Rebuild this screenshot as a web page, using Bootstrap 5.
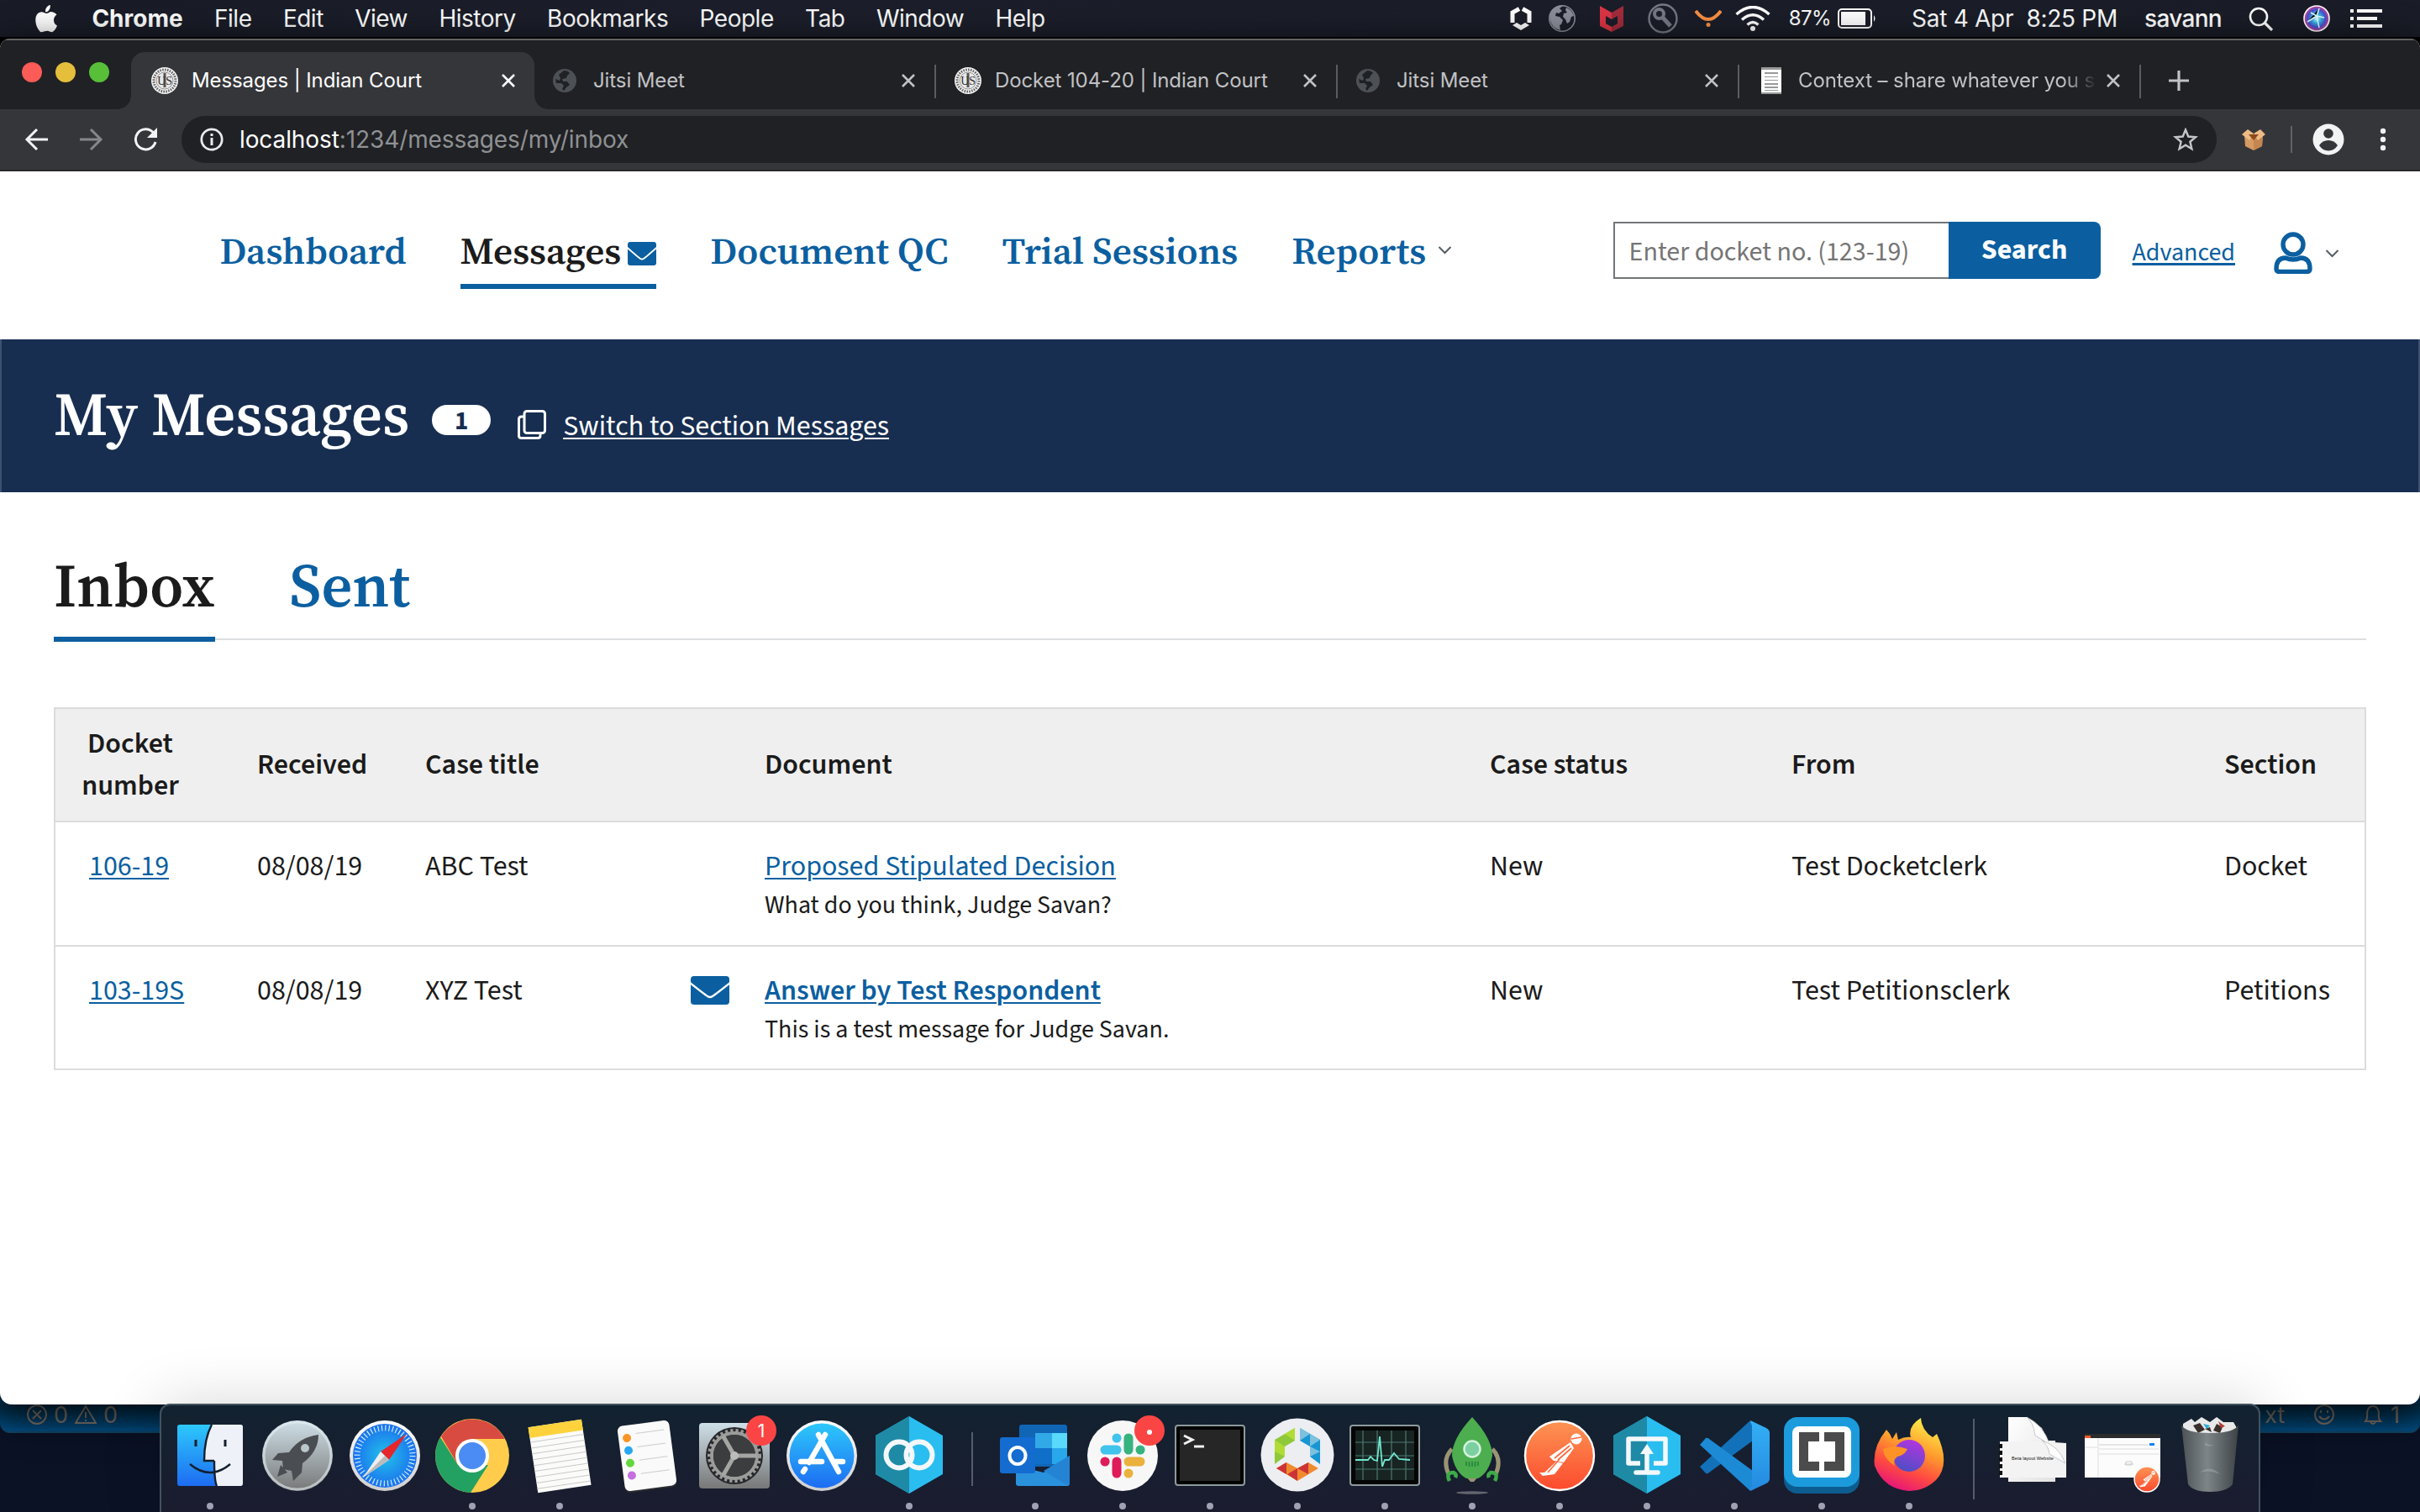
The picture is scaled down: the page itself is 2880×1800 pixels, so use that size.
<!DOCTYPE html>
<html lang="en">
<head>
<meta charset="utf-8">
<title>Messages | Indian Court</title>
<link href="https://cdn.jsdelivr.net/npm/bootstrap@5.3.0/dist/css/bootstrap.min.css" rel="stylesheet">
<style>
  html, body { width: 2880px; height: 1800px; margin: 0; overflow: hidden; }
  body { background: #0b1226; color: #1b1b1b; font-family: Inter, sans-serif; }
  svg { display: block; flex: none; }
  a { color: #0b5fa0; }

  /* spacing steps finer than Bootstrap's scale */
  .ml-8 { margin-left: 8px; } .ml-10 { margin-left: 10px; } .ml-15 { margin-left: 15px; } .ml-19 { margin-left: 19px; }
  .ml-20 { margin-left: 20px; } .ml-22 { margin-left: 22px; } .ml-24 { margin-left: 24px; } .ml-27 { margin-left: 27px; }
  .ml-29 { margin-left: 29px; } .ml-32 { margin-left: 32px; } .ml-35 { margin-left: 35px; } .ml-38 { margin-left: 38px; }
  .ml-42 { margin-left: 42px; } .ml-46 { margin-left: 46px; }

  .menubar { height: 44px; background: linear-gradient(90deg, #191c27, #1c1f2b 30%, #1a1d27); color: #fff; font-size: 28px; line-height: 44px; }
  .menu-names { padding-left: 42px; gap: 37.4px; letter-spacing: -.5px; }
  .menu-names svg { margin-right: 4px; }
  .app-name { font-weight: 700; letter-spacing: 0; }
  .menu-extras { padding-right: 45px; }
  .menu-extras > * { flex: none; white-space: pre; }
  .charge { font-size: 24px; letter-spacing: -.6px; }
  .clock { letter-spacing: -.28px; }
  .login { font-weight: 500; letter-spacing: -.67px; }

  .desk { height: 1756px; padding-top: 2px; background: linear-gradient(#000 0, #000 300px, #003a60 300px, #003a60 1650px, #0b1226 1650px); }
  .win { height: 1626px; border-radius: 12px 12px 14px 14px; background: #fff; z-index: 1; box-shadow: 0 12px 44px 6px rgba(0,0,0,.75); }
  .tabstrip { height: 84px; background: #202124; border-top: 2px solid #636363; color: #c0c2c5; font-size: 24px; letter-spacing: -.1px; }
  .lights { width: 156px; gap: 16px; padding: 0 0 4px 26px; margin-top: -2px; }
  .lights i { width: 24px; height: 24px; border-radius: 50%; }
  .l-close { background: #fc5b57; } .l-min { background: #e5bf3c; } .l-max { background: #57c038; }
  .btab { width: 476px; height: 68px; padding: 0 22px 0 22px; }
  .btab .lbl { line-height: 68px; white-space: nowrap; overflow: hidden; }
  .btab.on { width: 480px; background: #35363a; color: #fff; border-radius: 16px 16px 0 0; padding: 0 22px 0 24px; position: relative; }
  .btab.on::before, .btab.on::after { content: ""; position: absolute; bottom: 0; width: 16px; height: 16px; }
  .btab.on::before { left: -16px; background: radial-gradient(circle at 0 0, transparent 15.5px, #35363a 16px); }
  .btab.on::after { right: -16px; background: radial-gradient(circle at 100% 0, transparent 15.5px, #35363a 16px); }
  .tdiv { width: 2px; height: 40px; background: #5b5c5f; flex: none; margin-bottom: 13px; }
  .fade-end { -webkit-mask-image: linear-gradient(90deg, #000 315px, transparent 356px); width: 356px; }
  .plus { margin: 0 0 22px 32px; }

  .toolbar { height: 74px; background: #35363a; border-bottom: 2px solid #28282b; padding: 0 28px; }
  .omni { height: 56px; width: 2422px; border-radius: 28px; background: #202124; padding: 0 22px; font-size: 28px; letter-spacing: -.1px; color: #8f9194; }
  .omni b { color: #fff; font-weight: 400; }
  .tool-rule { width: 2px; height: 32px; background: #5f6368; }

  .court { font-family: "Source Sans 3", "Noto Sans CJK SC", "Open Sans", sans-serif; }
  .serif { font-family: "Source Serif 4", "Liberation Serif", serif; font-weight: 600; }
  .appnav { height: 200px; padding: 64px 96px 0 261.5px; }
  .mainlinks { gap: 64px; }
  .mainlinks a { font-size: 45px; line-height: 60px; white-space: nowrap; height: 76px; text-decoration: none; }
  .mainlinks a.cur { color: #1b1b1b; border-bottom: 6px solid #0b5fa0; }
  .mainlinks a svg { margin: 20px 0 0 8px; }
  .more { margin: 25px 0 0 14px; }
  .finder { margin-top: -4px; }
  .search-in { width: 399px; height: 68px; border: 2px solid #71767a; border-right: 0; border-radius: 0; padding: 4px 17px 0; font-size: 32px; color: #757575; }
  .search-in::placeholder { color: #757575; opacity: 1; }
  .search-btn { width: 181px; height: 68px; background: #0b5fa0; color: #fff; border: 0; border-radius: 0 8px 8px 0; font-weight: 700; font-size: 34px; line-height: 66px; padding: 0; }
  .adv { font-size: 30px; line-height: 73px; }
  .me { margin: 12px 0 0 46px; }
  .me-more { margin: 33px 0 0 15px; }

  .banner { height: 182px; background: #172e51; color: #fff; padding: 0 64px; box-shadow: inset 2px 0 #3d5170, inset -2px 0 #3d5170; }
  .banner h1 { font-size: 72px; line-height: 178px; margin: 0; }
  .banner a { color: #fff; font-size: 34px; line-height: 208px; }
  .banner svg { margin: 84px 0 0 32px; }
  .count { width: 70px; height: 36px; margin: 78px 0 0 27px; border-radius: 18px; background: #fff; color: #172e51; font-weight: 700; font-size: 31px; line-height: 38px; text-align: center; }

  .tabs { height: 176px; margin: 0 64px; gap: 89px; border-bottom: 2px solid #dcdee0; font-size: 72px; line-height: 100px; }
  .tabs a { text-decoration: none; height: 174px; padding-top: 61px; }
  .tabs a.cur { color: #1b1b1b; border-bottom: 6px solid #0b5fa0; height: 178px; }

  .box { margin: 80px 64px 0; border: 2px solid #dcdcdc; }
  .msgs { table-layout: fixed; width: 2748px; margin: 0; font-size: 34px; line-height: 50px; color: #1b1b1b; }
  .c1 { width: 216px; } .c2 { width: 200px; } .c3 { width: 316px; } .c4 { width: 88px; }
  .c5 { width: 863px; } .c6 { width: 359px; } .c7 { width: 515px; } .c8 { width: 191px; }
  .msgs th { background: #efefef; height: 134px; border-bottom: 2px solid #dcdcdc; vertical-align: middle; padding: 0 0 0 24px; font-weight: 600; }
  .msgs td { height: 148px; border-bottom: 2px solid #dcdcdc; vertical-align: top; padding: 28px 0 0 24px; white-space: nowrap; }
  .msgs tr:last-child td { height: 146px; border-bottom: 0; }
  .msgs td:first-child { padding-left: 40px; }
  .msgs th:first-child { text-align: center; padding: 0 38px 0 0; }
  .msgs thead tr th { height: 134px; }
  .msgs td svg { margin-top: 7px; }
  .note { font-size: 30px; line-height: 42px; }
  .msgs a, .adv, .banner a { text-decoration-thickness: 2px; text-underline-offset: 3px; }

  .vsbar { height: 34px; background: linear-gradient(#003250, #00518a); border-bottom: 2px solid #14486a; border-radius: 0 0 12px 12px; color: #8a7f76; font-size: 27px; line-height: 26px; padding: 0 24px 0 32px; }
  .dock { position: absolute; left: 190px; top: 1671px; width: 2500px; height: 129px; z-index: 3; border: 2px solid #43525d; border-bottom: 0; border-radius: 12px 12px 0 0; background: linear-gradient(#122230, #1b1c2f); padding: 0 6px; box-shadow: 0 0 70px rgba(0,0,0,.16); }
</style>
</head>
<body>

<svg width="0" height="0" class="position-absolute">
  <defs>
    <linearGradient id="gBlue" x1="0" y1="0" x2="0" y2="1"><stop offset="0" stop-color="#2dc8fb"/><stop offset="1" stop-color="#1d6cf2"/></linearGradient>
    <linearGradient id="gGrey" x1="0" y1="0" x2="0" y2="1"><stop offset="0" stop-color="#cfe0e8"/><stop offset="1" stop-color="#777"/></linearGradient>
    <linearGradient id="gRim" x1="0" y1="0" x2="0" y2="1"><stop offset="0" stop-color="#fff"/><stop offset="1" stop-color="#cfcfcf"/></linearGradient>
    <radialGradient id="gSaf"><stop offset="0" stop-color="#22c3ea"/><stop offset="1" stop-color="#1b6fee"/></radialGradient>
    <linearGradient id="gPost" x1="0" y1="0" x2="0" y2="1"><stop offset="0" stop-color="#fd9453"/><stop offset="1" stop-color="#fc4a2e"/></linearGradient>
    <linearGradient id="gFox" x1=".7" y1="0" x2=".3" y2="1"><stop offset="0" stop-color="#fff04a"/><stop offset=".4" stop-color="#ff9a2d"/><stop offset=".7" stop-color="#ff4a41"/><stop offset="1" stop-color="#e4117e"/></linearGradient>
    <linearGradient id="gOrb" x1=".7" y1="0" x2=".3" y2="1"><stop offset="0" stop-color="#b335e0"/><stop offset="1" stop-color="#4a4fc4"/></linearGradient>
    <linearGradient id="gCan" x1="0" y1="0" x2="1" y2="0"><stop offset="0" stop-color="#4b5154"/><stop offset=".45" stop-color="#7e8587"/><stop offset="1" stop-color="#3c4245"/></linearGradient>
    <linearGradient id="gCode" x1="0" y1="0" x2="0" y2="1"><stop offset="0" stop-color="#34b0f5"/><stop offset="1" stop-color="#2489e0"/></linearGradient>
    <linearGradient id="gPage" x1="0" y1="0" x2="1" y2="1"><stop offset="0" stop-color="#fff"/><stop offset="1" stop-color="#e2e2e2"/></linearGradient>
    <radialGradient id="gSiri"><stop offset="0" stop-color="#e8ffff"/><stop offset=".35" stop-color="#33b7e8"/><stop offset=".7" stop-color="#4a4fd0"/><stop offset="1" stop-color="#d8438f"/></radialGradient>
    <symbol id="globe" viewBox="0 0 32 32"><circle cx="16" cy="16" r="15.2" fill="none" stroke="#8b8e98" stroke-width="1.6"/><path fill="#8b8e98" d="M4 6Q9 0 17 1L13 4 16 7 12 10 9 9 8 13 13 14 17 18 15 23 13 24 14 30Q4 28 1.500 17Q1 10 4 6ZM21 3Q28 6 30 13L27 14 25 20 22 22 20 17 17 14 18 10 22 9 20 6Z"/></symbol>
    <symbol id="globe-dim" viewBox="0 0 28 28"><circle cx="14" cy="14" r="14" fill="#4d5156"/><path fill="#202124" d="M13 2Q18 2 20 5L17 8 16 11 11 12 12 15 17 15 20 19 16 22 13 26 11 24 13 20 10 17 4 17 3 12 8 14 9 11 7 7Z"/></symbol>
    <symbol id="seal" viewBox="0 0 32 32"><circle cx="16" cy="16" r="16" fill="#f4f4f4"/><circle cx="16" cy="16" r="13" fill="none" stroke="#666" stroke-width="3" stroke-dasharray="1.6 1.3"/><circle cx="16" cy="16" r="10" fill="#e8e8e8" stroke="#777" stroke-width=".8"/><path d="M14.500 7h3v17h-3z" fill="#555"/><text x="16" y="21" text-anchor="middle" font-family="Liberation Serif" font-size="14" fill="#333">US</text></symbol>
    <symbol id="x" viewBox="0 0 18 18"><path d="M2 2l14 14M16 2L2 16" stroke="currentColor" stroke-width="2.6" fill="none"/></symbol>
    <symbol id="mail" viewBox="0 0 46 34"><rect width="46" height="34" rx="4" fill="#0b5fa0"/><path d="M-1 8Q18 23 20 24Q23 26 26 24Q28 23 47 8" fill="none" stroke="#fff" stroke-width="2.4"/></symbol>
    <symbol id="man" viewBox="-42 -42 84 84"><g fill="#fff"><circle cx="20" cy="-20" r="6.500"/><path d="M13-16L17-9 5 8-7 6-12 1Z"/><path d="M-4 7L4 9-6 22-20 24-24 20-18 20Z"/></g><path d="M12-12L-6 3M14-9L-2 5M14-20L26-22M0 4L-14 20" stroke="#fc6b3f" stroke-width="1.700"/></symbol>
    <symbol id="chev" viewBox="0 0 17 10"><path d="M1.500 1l7 7 7-7" fill="none" stroke="#565c65" stroke-width="2"/></symbol>
  </defs>
</svg>

<!-- macOS menu bar -->
<div class="menubar d-flex justify-content-between">
  <div class="menu-names d-flex align-items-center">
    <svg width="26" height="34" viewBox="0 0 26 34" fill="#fff"><path d="M18 1Q18 5 16 7.500T12 9Q12 5 14 3T18 1ZM13 11Q15 11 18 9Q23 9 25.500 12.500Q22 15 22 19Q22 23.500 26 25.500Q24 31 20.500 33Q19 33.500 17 32.500T13 32Q11 32 9.500 32.700T6 33Q1 28 .3 20Q0 14 3 11Q6 8.500 9 9.500T13 11Z"/></svg>
    <span class="app-name">Chrome</span><span>File</span><span>Edit</span><span>View</span><span>History</span><span>Bookmarks</span><span>People</span><span>Tab</span><span>Window</span><span>Help</span>
  </div>
  <div class="menu-extras d-flex align-items-center">
    <svg width="26" height="28" viewBox="0 0 26 28" fill="none"><path d="M11 2.500L3 7V19M15 2.500L23 7V19" stroke="#fff" stroke-width="5"/><path d="M13 28L3 22 8 19 13 22 18 19 23 22Z" fill="#fff"/></svg>
    <svg class="ml-20" width="32" height="32"><use href="#globe"/></svg>
    <svg class="ml-29" width="28" height="32" viewBox="0 0 28 32"><path d="M0 1L14 9V17L7 13V22L14 26V32L0 25Z" fill="#dc3545"/><path d="M28 1L14 9V17L21 13V22L14 26V32L28 25Z" fill="#a32c3b"/></svg>
    <svg class="ml-29" width="36" height="36" viewBox="0 0 36 36" fill="none" stroke="#777a84" stroke-width="2.400"><circle cx="18" cy="18" r="16.500"/><circle cx="13.500" cy="12.500" r="5.500" stroke-width="4"/><path d="M17 16L27 27" stroke-width="5"/></svg>
    <svg class="ml-20" width="32" height="20" viewBox="0 0 32 20"><path d="M1 1Q16 21 31 1" fill="none" stroke="#fb9143" stroke-width="4"/><circle cx="16" cy="17.500" r="2.500" fill="#fb9143"/></svg>
    <svg class="ms-3" width="42" height="30" viewBox="0 0 42 30" fill="none" stroke="#fff" stroke-width="3.400"><path d="M1.500 10Q21-7 40.500 10M8 16.500Q21 5 34 16.500M14.500 22.500Q21 16.500 27.500 22.500"/><circle cx="21" cy="27" r="3" fill="#fff" stroke="none"/></svg>
    <span class="charge ml-22">87%</span>
    <svg class="ml-8" width="46" height="24" viewBox="0 0 46 24"><rect x="1" y="1" width="39" height="22" rx="4" fill="none" stroke="#fff" stroke-width="2"/><rect x="4" y="4" width="29" height="16" fill="#fff"/><path d="M43 8Q46 12 43 16Z" fill="#fff"/></svg>
    <span class="clock ml-42">Sat 4 Apr  8:25 PM</span>
    <span class="login ml-32">savann</span>
    <svg class="ml-32" width="30" height="29" viewBox="0 0 30 29" fill="none" stroke="#fff" stroke-width="2.600"><circle cx="12" cy="12" r="10"/><path d="M19 19l9 9" stroke-width="3.200"/></svg>
    <svg class="ml-35" width="32" height="32" viewBox="0 0 32 32"><circle cx="16" cy="16" r="15" fill="url(#gSiri)" stroke="#fff" stroke-width="1.600"/><path d="M5 20L16 13 19 4M16 13l3 14M16 13l9 2M16 13L9 9" stroke="#dff" stroke-width="1.500"/></svg>
    <svg class="ml-24" width="38" height="22" viewBox="0 0 38 22" fill="#fff"><path d="M0 0h4v4H0zM8 0h30v4H8zM0 9h4v4H0zM8 9h24v4H8zM0 18h4v4H0zM8 18h30v4H8z"/></svg>
  </div>
</div>

<div class="desk">
  <!-- browser window -->
  <div class="win position-relative overflow-hidden">
    <div class="tabstrip d-flex align-items-end">
      <div class="lights d-flex align-items-center align-self-center"><i class="l-close"></i><i class="l-min"></i><i class="l-max"></i></div>
      <div class="btab on d-flex align-items-center"><svg width="32" height="32"><use href="#seal"/></svg><span class="lbl ms-3">Messages | Indian Court</span><svg class="ms-auto" width="18" height="18"><use href="#x"/></svg></div>
      <div class="btab d-flex align-items-center"><svg width="28" height="28"><use href="#globe-dim"/></svg><span class="lbl ml-20">Jitsi Meet</span><svg class="ms-auto" width="18" height="18"><use href="#x"/></svg></div>
      <div class="tdiv"></div>
      <div class="btab d-flex align-items-center"><svg width="32" height="32"><use href="#seal"/></svg><span class="lbl ms-3">Docket 104-20 | Indian Court</span><svg class="ms-auto" width="18" height="18"><use href="#x"/></svg></div>
      <div class="tdiv"></div>
      <div class="btab d-flex align-items-center"><svg width="28" height="28"><use href="#globe-dim"/></svg><span class="lbl ml-20">Jitsi Meet</span><svg class="ms-auto" width="18" height="18"><use href="#x"/></svg></div>
      <div class="tdiv"></div>
      <div class="btab d-flex align-items-center"><svg width="28" height="32" viewBox="-4 0 28 32"><path fill="#fff" d="M0 0h24v32H0z"/><path fill="#999" d="M0 0h24v3H0zM0 30h24v2H0zM4 6h16v2H4zM4 11h16v1H4zM4 15h16v1H4zM4 19h16v2H4zM4 23h16v2H4zM4 27h16v1H4z"/></svg><span class="lbl fade-end ml-20">Context – share whatever you s</span><svg class="ms-auto" width="18" height="18"><use href="#x"/></svg></div>
      <div class="tdiv"></div>
      <svg class="plus" width="26" height="24" viewBox="0 0 26 24"><path d="M13 0v24M1 12h24" stroke="#c0c2c5" stroke-width="3.200"/></svg>
    </div>

    <div class="toolbar d-flex align-items-center">
      <svg width="32" height="28" viewBox="0 0 32 28" fill="none" stroke="#f1f3f4" stroke-width="3"><path d="M29 14H5M16 2L4 14l12 12"/></svg>
      <svg class="ml-32" width="32" height="28" viewBox="0 0 32 28" fill="none" stroke="#85878a" stroke-width="3"><path d="M3 14h24M16 2l12 12L16 26"/></svg>
      <svg class="ml-35" width="30" height="28" viewBox="0 0 30 28"><path d="M26 17A12 12 0 1 1 23.500 6" fill="none" stroke="#f1f3f4" stroke-width="3"/><path d="M28 0V12H16Z" fill="#f1f3f4"/></svg>
      <div class="omni d-flex align-items-center ml-27">
        <svg width="28" height="28" viewBox="0 0 28 28"><circle cx="14" cy="14" r="12.200" fill="none" stroke="#e8eaed" stroke-width="2.800"/><path d="M12.500 12h3v9h-3zM12.500 7h3v3h-3z" fill="#e8eaed"/></svg>
        <span class="ml-19"><b>localhost</b>:1234/messages/my/inbox</span>
        <svg class="ms-auto" width="30" height="28" viewBox="0 0 30 28"><path d="M15 2.500L18.300 10.500 27 11.200 20.400 16.800 22.400 25.200 15 20.700 7.600 25.200 9.600 16.800 3 11.200 11.700 10.500Z" fill="none" stroke="#c4c7ca" stroke-width="2.400"/></svg>
      </div>
      <svg class="ml-29" width="30" height="26" viewBox="0 0 30 26"><path d="M4 8l11 4v14L5 21zM26 8l-11 4v14l10-5z" fill="#d79a63"/><path d="M15 12v14l10-5 1-13z" fill="#c48650"/><path d="M1 7l7-6 7 5-5 8zM29 7l-6-6-8 5 5 8z" fill="#edbb85"/><path d="M9 7l12 0-6 7z" fill="#8e4a1e"/></svg>
      <div class="tool-rule ml-29"></div>
      <svg class="ml-24" width="38" height="38" viewBox="0 0 38 38"><circle cx="19" cy="19" r="18.500" fill="#f1f3f4"/><circle cx="19" cy="12" r="5.800" fill="#35363a"/><path d="M8 26Q12 20 19 20T30 26Q26 32.500 19 32.500T8 26Z" fill="#35363a"/></svg>
      <svg class="ml-42" width="8" height="28" viewBox="0 0 8 28" fill="#f1f3f4"><circle cx="4" cy="4" r="3.200"/><circle cx="4" cy="14" r="3.200"/><circle cx="4" cy="24" r="3.200"/></svg>
    </div>

    <!-- page -->
    <div class="court">
      <div class="appnav d-flex">
        <nav class="mainlinks serif d-flex">
          <a href="#">Dashboard</a>
          <a href="#" class="cur d-flex">Messages<svg width="34" height="28" viewBox="0 0 46 34" preserveAspectRatio="none"><use href="#mail"/></svg></a>
          <a href="#">Document QC</a>
          <a href="#">Trial Sessions</a>
          <a href="#">Reports</a>
        </nav>
        <svg class="more" width="17" height="10"><use href="#chev"/></svg>
        <div class="finder d-flex ms-auto">
          <input class="search-in" placeholder="Enter docket no. (123-19)"><button class="search-btn">Search</button>
          <a href="#" class="adv text-decoration-underline ml-38">Advanced</a>
          <svg class="me" width="46" height="50" viewBox="0 0 46 50" fill="none" stroke="#0b5fa0" stroke-width="5.400"><circle cx="23" cy="15" r="12"/><path d="M3 44Q3 31 14 31Q23 35 32 31Q43 31 43 44Q43 47.500 39 47.500H7Q3 47.500 3 44Z"/></svg>
          <svg class="me-more" width="17" height="10"><use href="#chev"/></svg>
        </div>
      </div>

      <div class="banner d-flex">
        <h1 class="serif">My Messages</h1>
        <span class="count">1</span>
        <svg width="34" height="35" viewBox="0 0 34 35" fill="none" stroke="#fff" stroke-width="3"><rect x="8" y="1.500" width="24.500" height="26" rx="3"/><path d="M7 8H4.500Q1.500 8 1.500 11V30.500Q1.500 33.500 4.500 33.500H24Q27 33.500 27 30.500V28"/></svg>
        <a href="#" class="ml-20">Switch to Section Messages</a>
      </div>

      <div class="tabs serif d-flex">
        <a href="#" class="cur">Inbox</a>
        <a href="#">Sent</a>
      </div>

      <div class="box">
        <table class="msgs table-borderless">
          <colgroup><col class="c1"><col class="c2"><col class="c3"><col class="c4"><col class="c5"><col class="c6"><col class="c7"><col class="c8"></colgroup>
          <thead><tr><th>Docket<br>number</th><th>Received</th><th>Case title</th><th></th><th>Document</th><th>Case status</th><th>From</th><th>Section</th></tr></thead>
          <tbody>
            <tr><td><a href="#">106-19</a></td><td>08/08/19</td><td>ABC Test</td><td></td><td><a href="#">Proposed Stipulated Decision</a><div class="note">What do you think, Judge Savan?</div></td><td>New</td><td>Test Docketclerk</td><td>Docket</td></tr>
            <tr><td><a href="#">103-19S</a></td><td>08/08/19</td><td>XYZ Test</td><td><svg width="46" height="34"><use href="#mail"/></svg></td><td><a href="#" class="fw-semibold">Answer by Test Respondent</a><div class="note">This is a test message for Judge Savan.</div></td><td>New</td><td>Test Petitionsclerk</td><td>Petitions</td></tr>
          </tbody>
        </table>
      </div>
    </div>
  </div>

  <!-- editor status bar showing under the browser -->
  <div class="vsbar d-flex">
    <svg width="24" height="24" viewBox="0 0 24 24" fill="none" stroke="#8a7f76" stroke-width="2"><circle cx="12" cy="12" r="11"/><path d="M7 7l10 10M17 7L7 17"/></svg>
    <span class="ml-8">0</span>
    <svg class="ml-8" width="26" height="24" viewBox="0 0 26 24" fill="none" stroke="#8a7f76" stroke-width="2"><path d="M13 2L25 22H1ZM13 9v7M13 18v2"/></svg>
    <span class="ml-8">0</span>
    <span class="ms-auto">xt</span>
    <svg class="ml-35" width="24" height="24" viewBox="0 0 24 24" fill="none" stroke="#8a7f76" stroke-width="2"><circle cx="12" cy="12" r="11"/><path d="M6 14Q12 21 18 14M8 7v3M16 7v3"/></svg>
    <svg class="ml-35" width="22" height="24" viewBox="0 0 22 24" fill="none" stroke="#8a7f76" stroke-width="2"><path d="M2 20Q5 17 4 10Q5 2 11 2T18 10Q17 17 20 20ZM8 21Q11 25 14 21"/></svg>
    <span class="ml-10">1</span>
  </div>
</div>

<!-- dock: every icon is centred on its own 104px cell, the running dot sits at y=60 -->
<div class="dock d-flex">
  <svg width="104" height="128" viewBox="-52 -60 104 128"><rect x="-39" y="-37" width="78" height="73" rx="3" fill="url(#gBlue)"/><path d="M2-37H36Q39-37 39-34V33Q39 36 36 36H8Q5 25 5 6H-7Q-7-20 2-37Z" fill="#eef2f8"/><path d="M-17-19v8M18-19v8" stroke="#13202f" stroke-width="3"/><path d="M-24 10Q0 30 24 10M5 6Q5 30 8 36M2-37Q-7-20-7 6H5" fill="none" stroke="#13202f" stroke-width="2.400"/><circle cy="60" r="4" fill="#a0a2b4"/></svg>
  <svg width="104" height="128" viewBox="-52 -60 104 128"><circle r="42" fill="url(#gGrey)"/><circle r="40" fill="none" stroke="#e4eef2" stroke-opacity=".6" stroke-width="3"/><path d="M25-25Q2-22-10-4L-23-3-30 5-18 6-17 16-7 18-5 30 5 20 6 9Q25-5 25-25ZM-20 11L-24 25-12 20Z" fill="#4a4e52"/><circle cx="9" cy="-9" r="5" fill="#b9c6cc"/></svg>
  <svg width="104" height="128" viewBox="-52 -60 104 128"><circle r="42" fill="url(#gRim)"/><circle r="38" fill="url(#gSaf)"/><circle r="33" fill="none" stroke="#cdeeff" stroke-width="7" stroke-dasharray="1.200 3.120"/><path d="M26-26L-5-5 5 5Z" fill="#e5262b"/><path d="M-26 26L-5-5 5 5Z" fill="#eee"/><path d="M-26 26L5 5 0 0Z" fill="#bbb"/></svg>
  <svg width="104" height="128" viewBox="-52 -60 104 128"><circle r="44" fill="#ffcd4b"/><path d="M-38-22A44 44 0 0 0-2 44L19 11H-17Z" fill="#23a162"/><path d="M-37-23A44 44 0 0 1 39-20H0L-18 9Z" fill="#d84b41"/><circle r="20" fill="#fff"/><circle r="16" fill="#4b8bf4"/><circle cy="60" r="4" fill="#a0a2b4"/></svg>
  <svg width="104" height="128" viewBox="-52 -60 104 128"><g transform="rotate(-8.500)"><rect x="-32" y="-39" width="64" height="79" fill="#fbfbfa"/><rect x="-32" y="-39" width="64" height="13" fill="#fdd23c"/><path d="M-32-21h64M-32-14h64M-32-7h64M-32 0h64M-32 7h64M-32 14h64M-32 21h64M-32 28h64M-32 35h64" stroke="#c9c9c9" stroke-width="1"/></g><circle cy="60" r="4" fill="#a0a2b4"/></svg>
  <svg width="104" height="128" viewBox="-52 -60 104 128"><g transform="rotate(-7.500)"><rect x="-31" y="-38" width="62" height="79" rx="6" fill="#2a2c30"/><rect x="-31" y="-39" width="62" height="78" rx="6" fill="#fafafa"/><path d="M-10-28h34M-10-12h34M-10 4h34M-10 20h34" stroke="#ccc"/><circle cx="-21" cy="-24" r="5" fill="#fd9526"/><circle cx="-21" cy="-9" r="5" fill="#28a8f4"/><circle cx="-21" cy="6" r="5" fill="#62d83d"/><circle cx="-21" cy="21" r="5" fill="#c670e0"/></g></svg>
  <svg width="104" height="128" viewBox="-52 -60 104 128"><rect x="-42" y="-39" width="84" height="78" rx="4" fill="url(#gGrey)"/><circle r="34" fill="#26282b"/><circle r="27" fill="none" stroke="#9b9b9a" stroke-width="4"/><circle r="30" fill="none" stroke="#9b9b9a" stroke-width="4" stroke-dasharray="3.200 3"/><circle r="25" fill="#3c3d3f"/><path d="M0 0H27M0 0L-13.500-23.500M0 0L-13.500 23.500" stroke="#a5a5a4" stroke-width="5"/><circle r="5" fill="#bbb"/><circle cx="32" cy="-30" r="18" fill="#fb4544"/><text x="32" y="-22" font-size="21" fill="#fff" text-anchor="middle" font-family="Inter">1</text></svg>
  <svg width="104" height="128" viewBox="-52 -60 104 128"><circle r="42" fill="url(#gRim)"/><circle r="38.500" fill="url(#gBlue)"/><path d="M4-25L-15 8M-20 16l-2 3M-4-25L20 19M-25 7H0M16 7H25" stroke="#fff" stroke-width="6.500" stroke-linecap="round"/></svg>
  <svg width="104" height="128" viewBox="-52 -60 104 128"><path d="M0-47L40-24V22L0 45-40 22V-24Z" fill="#2abdf0"/><path d="M0-47V45L-40 22V-24Z" fill="#1e8aa6"/><g fill="none" stroke="#f4f8fa" stroke-width="6"><circle cx="-12" cy="-1" r="15.500"/><circle cx="12" cy="-1" r="15.500"/></g><circle cy="60" r="4" fill="#a0a2b4"/></svg>
  <svg width="46" height="128" viewBox="0 0 46 128"><path d="M23 32v64" stroke="#565c6b" stroke-width="2"/></svg>
  <svg width="104" height="128" viewBox="-52 -60 104 128"><rect x="-19" y="-37" width="57" height="50" rx="3" fill="#1066b5"/><path d="M0-27H20V-9H0z" fill="#32a9e7"/><path d="M20-27H38V-9H20z" fill="#58d9fd"/><path d="M0-9H20V10H0z" fill="#0f6fc9"/><path d="M20-9H38V10H20z" fill="#28a8ea"/><path d="M-23 12L10 20 41 0V33Q41 36 38 36H-20Q-23 36-23 33Z" fill="#2a92dd"/><path d="M10 18L41 0V33L38 35Z" fill="#2583d3"/><rect x="-42" y="-22" width="42" height="43" rx="3" fill="#146bd0"/><ellipse cx="-21" cy="0" rx="9.500" ry="10" fill="none" stroke="#fff" stroke-width="4"/><circle cy="60" r="4" fill="#a0a2b4"/></svg>
  <svg width="104" height="128" viewBox="-52 -60 104 128"><circle r="42" fill="#f7f7f7"/><g fill="none" stroke-width="11" stroke-linecap="round"><path d="M7-21V-7" stroke="#36b37e"/><path d="M-21-7H-7M-7-21v-.1" stroke="#40c4ec"/><path d="M21-7h.1" stroke="#36b37e"/><path d="M-7 7V21M-21 7h.1" stroke="#de1c59"/><path d="M7 7H21M7 21v.1" stroke="#eab13c"/></g><circle cx="32" cy="-30" r="18" fill="#fb4544"/><circle cx="32" cy="-28" r="3" fill="#fff"/><circle cy="60" r="4" fill="#a0a2b4"/></svg>
  <svg width="104" height="128" viewBox="-52 -60 104 128"><rect x="-41" y="-36" width="82" height="71" rx="3" fill="#020202" stroke="#8d9a9c" stroke-width="2"/><rect x="-36" y="-31" width="72" height="61" fill="#262626"/><path d="M-31-24l10 5-10 5M-19-11H-7" fill="none" stroke="#f1f1f1" stroke-width="3"/><circle cy="60" r="4" fill="#a0a2b4"/></svg>
  <svg width="104" height="128" viewBox="-52 -60 104 128"><circle cy="-1" r="43.500" fill="#eceef2"/><path d="M-3-33V-18L-15-11V1L-27 10V-19Z" fill="#8fc93a"/><path d="M-3-33V-18L-15-26ZM-27-19L-15-11-27-5ZM-15-11V1L-27-5Z" fill="#b0dc35"/><path d="M3-33V-18L15-11V1L27 10V-19Z" fill="#1796d3"/><path d="M3-33L15-26 3-18ZM15-26L27-19 15-11ZM15-11L27-5 15 1Z" fill="#7cc2de"/><path d="M-25 15L-13 8 0 15 13 8 25 15 0 30Z" fill="#f08b2d"/><path d="M-25 15L-13 8V22ZM-12 22L0 15V30ZM0 15L13 8V22Z" fill="#cc3337"/><circle cy="60" r="4" fill="#a0a2b4"/></svg>
  <svg width="104" height="128" viewBox="-52 -60 104 128"><rect x="-41" y="-36" width="82" height="71" rx="3" fill="#050505" stroke="#8d9a9c" stroke-width="2"/><rect x="-35" y="-30" width="70" height="59" fill="#172422"/><path d="M-26-30v59M-9-30v59M8-30v59M25-30v59M-35-16h70M-35 0h70M-35 16h70" stroke="#4d7870" stroke-width="1.200"/><path d="M-35 5H-20L-17 1-13 5-9 6-6-23-3 13 0 5H5L11-3 17 4 30 5" fill="none" stroke="#6fe8cf" stroke-width="1.800"/><circle cy="60" r="4" fill="#a0a2b4"/></svg>
  <svg width="104" height="128" viewBox="-52 -60 104 128"><path d="M-24-8Q-36 4-28 22M24-8Q36 4 28 22" fill="none" stroke="#9a9474" stroke-width="5"/><path d="M-8 24H8L2 31H-2Z" fill="#9a9474"/><path d="M0-46Q24-20 24 0Q20 20 7 27H-7Q-20 20-24 0Q-24-20 0-46Z" fill="#4cae4f"/><path d="M-27 30Q-32 20-22 20Q-18 22-20 26M27 30Q32 20 22 20Q18 22 20 26" fill="none" stroke="#3dab48" stroke-width="4.500"/><circle cy="-8" r="9.500" fill="#7ccfa0" stroke="#d4f3df" stroke-width="2.500"/><path d="M-7 7v5M-3.500 7v6M0 7v6M3.500 7v6M7 7v5" stroke="#24843b" stroke-width="1.600"/><ellipse cy="44" rx="19" ry="1.800" fill="#63656f"/><circle cy="60" r="4" fill="#a0a2b4"/></svg>
  <svg width="104" height="128" viewBox="-52 -60 104 128"><circle r="41" fill="url(#gPost)" stroke="#fff" stroke-width="2.400"/><use href="#man" x="-42" y="-42" width="84" height="84"/><circle cy="60" r="4" fill="#a0a2b4"/></svg>
  <svg width="104" height="128" viewBox="-52 -60 104 128"><path d="M0-47L40-24V22L0 45-40 22V-24Z" fill="#2abdf0"/><path d="M0-47V45L-40 22V-24Z" fill="#1e8aa6"/><path d="M-8 9H-22V-20H22V9H8" fill="none" stroke="#f4f8fa" stroke-width="5.500" stroke-linejoin="round"/><path d="M0 20V-6M-13 20H13" stroke="#f4f8fa" stroke-width="5.500" stroke-linecap="round"/><path d="M-8-2L0-14 8-2Z" fill="#f4f8fa"/><circle cy="60" r="4" fill="#a0a2b4"/></svg>
  <svg width="104" height="128" viewBox="-52 -60 104 128"><path d="M-41 13L-34 21Q-32 22-30 20L22-18V-41L18-41Z" fill="#1271b8"/><path d="M-41-13L-34-21Q-32-22-30-20L22 18V41L18 41Z" fill="#1c8ad4"/><path d="M19-42L38-33Q42-31 42-27V27Q42 31 38 33L19 42Q17 41 21 36V-36Q19-40 19-42Z" fill="url(#gCode)"/><circle cy="60" r="4" fill="#a0a2b4"/></svg>
  <svg width="104" height="128" viewBox="-52 -60 104 128"><rect x="-45" y="-40" width="90" height="85" rx="16" fill="#0d5c90"/><rect x="-45" y="-46" width="90" height="83" rx="16" fill="#1b9bdc"/><rect x="-35" y="-35" width="70" height="61" rx="8" fill="#fff"/><path d="M-27-28H-3V-17H-16V7H-3V18H-27ZM27-28H3V-17H16V7H3V18H27Z" fill="#4b4b4b"/><circle cy="60" r="4" fill="#a0a2b4"/></svg>
  <svg width="104" height="128" viewBox="-52 -60 104 128"><path d="M-27-31Q-22-26-20-20L-15-28-13-19Q-5-23 2-22Q-2-35 14-45Q15-30 28-22L33-26Q50 10 32 29Q18 42 0 42Q-30 40-41 12Q-44-10-27-31Z" fill="url(#gFox)"/><circle cx="0" cy="0" r="19" fill="url(#gOrb)"/><path d="M-31-8Q-18-14-2-8Q-6 0-14 1Q-20 6-17 12Q-30 4-31-8Z" fill="#ff9226"/><circle cy="60" r="4" fill="#a0a2b4"/></svg>
  <svg width="46" height="128" viewBox="0 0 46 128"><path d="M25 16v96" stroke="#565c6b" stroke-width="2"/></svg>
  <svg width="104" height="128" viewBox="-52 -60 104 128"><path d="M-32-46H-10L8-33 15-18H24V31H-32Z" fill="url(#gPage)"/><path d="M-10-46Q-2-40 0-24L17-14Q10-36-10-46Z" fill="#fff" stroke="#bbb" stroke-width=".8"/><path d="M-40-17H8L37-15V26H-42V-17Z" fill="#f3f3f3"/><path d="M8-18Q16-12 17-2L36 9Q28-12 8-18Z" fill="#fff" stroke="#bbb" stroke-width=".8"/><path d="M-41-14V24" stroke="#111" stroke-width="4" stroke-dasharray="5 3"/><text x="-3" y="5" font-size="6.200" textLength="50" lengthAdjust="spacingAndGlyphs" font-family="Liberation Sans" text-anchor="middle" fill="#111">Beta layout Website</text></svg>
  <svg width="104" height="128" viewBox="-52 -60 104 128"><path d="M-45-26H45V26H-45Z" fill="#fcfcfc"/><path d="M-45-26H45V-21H-45Z" fill="#2c2c2c"/><path d="M-45-24H-38V-21H-45z" fill="#f05a28"/><path d="M-28-14H30V-12H-28z" fill="#e5e5e5"/><path d="M32-15h6v3h-6z" fill="#1583f0"/><path d="M-29-21V26M-45-10h15M-28-8H44M-28-2H44" stroke="#ddd"/><path d="M2 10h11M4 7h7v4H4z" stroke="#ccc" fill="none"/><circle cx="29" cy="28" r="15" fill="url(#gPost)" stroke="#fff" stroke-width="1.500"/><use href="#man" x="13" y="12" width="32" height="32"/></svg>
  <svg width="104" height="128" viewBox="-52 -60 104 128"><path d="M-32-38L-22-44-18-40-10-46 0-40 8-46 16-40 28-40 32-33Q20-25 0-25T-32-33Z" fill="#e8e8e8"/><path d="M-20-36l8-3 6 8-8 4zM8-38l7 4-3 7-8-3zM-6-32l6-2 2 6z" fill="#3a2f2c"/><path d="M-8-38l8 2-4 4z" fill="#2ba8d8"/><path d="M10-41l8 6-5 2z" fill="#b33b33"/><path d="M-34-37Q-30-27 0-27T34-37L27 34Q20 43 0 43T-26 34Z" fill="url(#gCan)"/><path d="M-6-16Q6-8 14-18Q8-10-6-12zM-12 20Q0 10 12 22Q0 16-12 20z" fill="#a5abad" opacity=".5"/></svg>
</div>

<script src="https://cdn.jsdelivr.net/npm/bootstrap@5.3.0/dist/js/bootstrap.bundle.min.js"></script>
</body>
</html>
